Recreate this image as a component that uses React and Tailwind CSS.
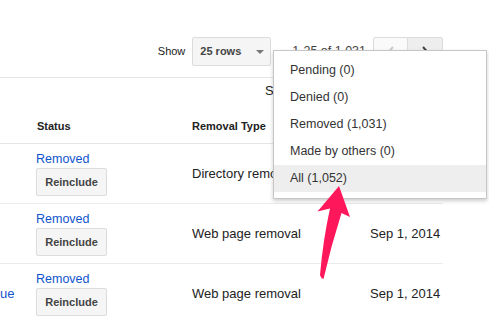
import React from 'react';

const rows = [
  { lead: '', type: 'Directory removal', date: 'Sep 1, 2014' },
  { lead: '', type: 'Web page removal', date: 'Sep 1, 2014' },
  { lead: 'ue', type: 'Web page removal', date: 'Sep 1, 2014' },
];

const filters = ['Pending (0)', 'Denied (0)', 'Removed (1,031)', 'Made by others (0)', 'All (1,052)'];

function Chevron({ dir, color }) {
  return (
    <svg width="8" height="12" viewBox="0 0 8 12">
      <path
        d={dir === 'left' ? 'M6 1 L1.5 6 L6 11' : 'M2 1 L6.5 6 L2 11'}
        fill="none"
        stroke={color}
        strokeWidth="2"
      />
    </svg>
  );
}

function ReincludeButton() {
  return (
    <button
      type="button"
      className="flex h-[28px] w-[71px] items-center justify-center rounded-[2px] border border-[#dcdcdc] bg-[#f5f5f5] text-[11px] font-bold text-[#444]"
    >
      Reinclude
    </button>
  );
}

export default function App() {
  return (
    <div
      className="relative h-[318px] w-[489px] overflow-hidden bg-white text-[#222]"
      style={{ fontFamily: '"Liberation Sans", Arial, sans-serif' }}
    >
      <div className="w-[443px]">
        {/* toolbar */}
        <div className="mt-[37px] flex h-[29px] items-center justify-end">
          <span className="text-[11px] text-[#222]">Show</span>
          <div className="ml-[7px] flex h-[29px] w-[79px] items-center justify-between rounded-[2px] border border-[#dcdcdc] bg-[#f5f5f5] pl-[7px] pr-[6px]">
            <span className="text-[11px] font-bold text-[#444]">25 rows</span>
            <svg width="8" height="4" viewBox="0 0 8 4">
              <path d="M0 0 H8 L4 4 Z" fill="#777" />
            </svg>
          </div>
          <span className="ml-[21px] text-[12.5px] text-[#444]">1-25 of 1,031</span>
          <div className="ml-[7px] flex">
            <button
              type="button"
              className="flex h-[29px] w-[35px] items-center justify-center rounded-l-[2px] border border-[#dcdcdc] bg-[#fafafa]"
            >
              <Chevron dir="left" color="#ccc" />
            </button>
            <button
              type="button"
              className="-ml-px flex h-[29px] w-[36px] items-center justify-center rounded-r-[2px] border border-[#dcdcdc] bg-[#eeeeee]"
            >
              <Chevron dir="right" color="#444" />
            </button>
          </div>
        </div>
        <div className="h-[12px] border-b border-[#e5e5e5]" />

        <div className="h-[32px] pl-[265px] pt-[5px] text-[13px] leading-[15px] whitespace-nowrap">
          Show
        </div>

        {/* table header */}
        <div className="flex h-[34px] items-center border-b border-[#e5e5e5] text-[11px] font-bold">
          <div className="w-[37px]" />
          <div className="w-[155px]">Status</div>
          <div className="flex-1">Removal Type</div>
          <div className="w-[70px]" />
        </div>

        {rows.map((row, i) => (
          <div key={i} className="flex h-[60px] items-center border-b border-[#ebebeb] text-[13px]">
            <div className="w-[36px] text-[#15c]">{row.lead}</div>
            <div className="flex w-[156px] flex-col gap-px">
              <a className="text-[12.5px] leading-[16px] text-[#15c]">Removed</a>
              <ReincludeButton />
            </div>
            <div className="flex-1 whitespace-nowrap">{row.type}</div>
            <div className="w-[73px] whitespace-nowrap">{row.date}</div>
          </div>
        ))}
      </div>

      {/* filter menu */}
      <div className="absolute left-[273px] top-[50px] w-[214px] border border-[#c6c6c6] bg-white py-[6px] shadow-[0_2px_4px_rgba(0,0,0,0.2)]">
        {filters.map((f, i) => (
          <div
            key={f}
            className={`flex h-[27px] items-center pl-[16px] text-[12.5px] text-[#333] ${
              i === filters.length - 1 ? 'bg-[#eeeeee]' : ''
            }`}
          >
            {f}
          </div>
        ))}
      </div>

      {/* annotation arrow */}
      <svg className="pointer-events-none absolute left-0 top-0" width="489" height="318" viewBox="0 0 489 318">
        <path
          d="M339 186 L350 217 L341.5 213 Q331 246 323.5 279 Q320.5 278 320 275 Q323 240 330 208.5 L317.5 211.5 Z"
          fill="#ff175c"
        />
      </svg>
    </div>
  );
}
